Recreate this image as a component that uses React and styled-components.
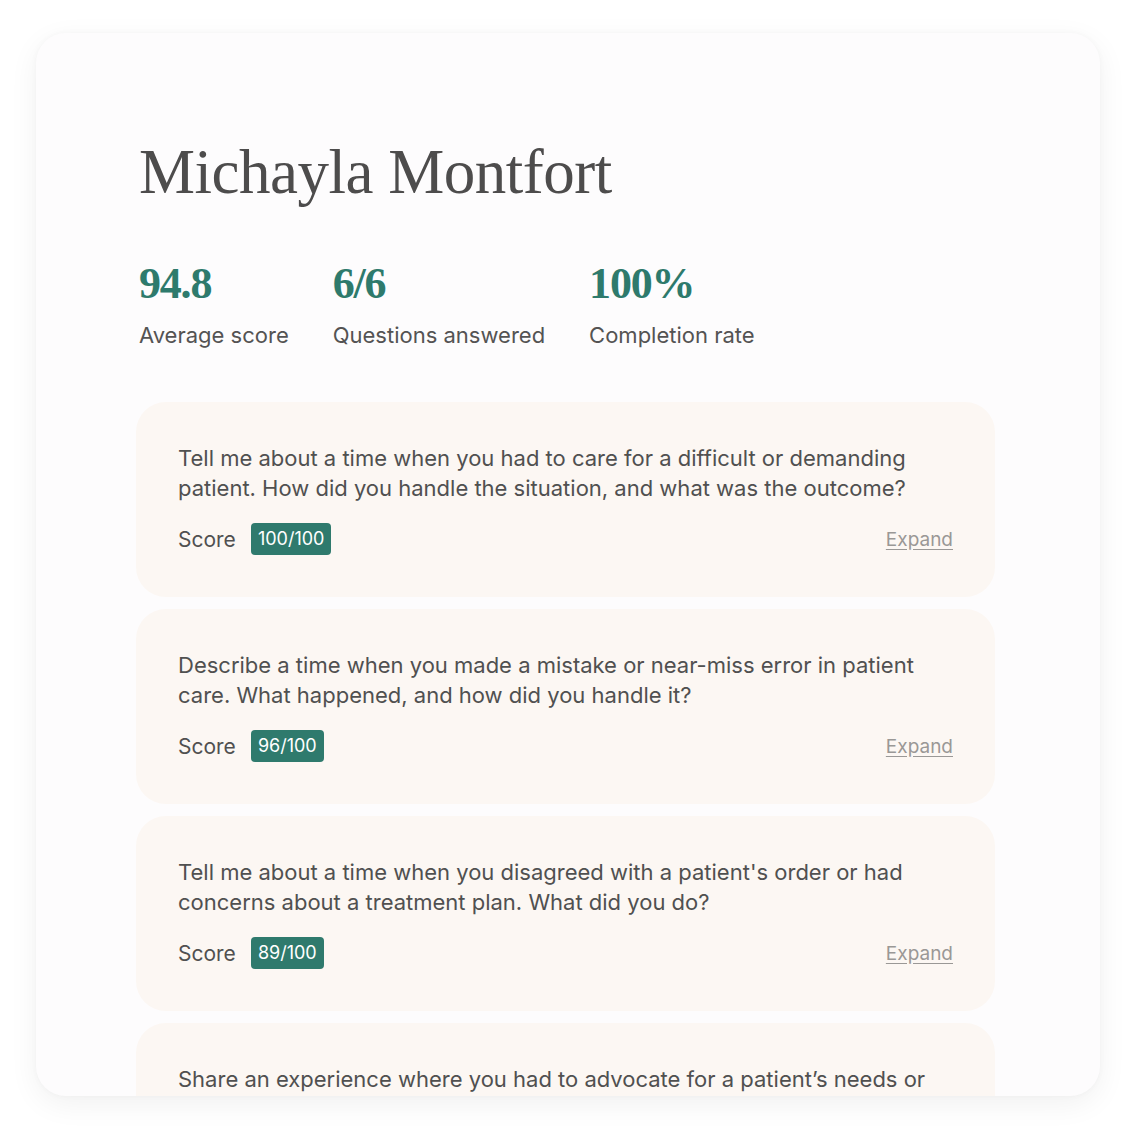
import React from "react";
import styled, { createGlobalStyle } from "styled-components";

const Global = createGlobalStyle`
  html, body { margin: 0; padding: 0; background: #ffffff; }
  body { font-family: "Inter", "Liberation Sans", sans-serif; }
`;

const Page = styled.div`
  width: 1137px;
  height: 1137px;
  padding: 33px 37px 41px 36px;
  box-sizing: border-box;
`;

const Panel = styled.div`
  height: 100%;
  background: #fdfcfd;
  border-radius: 30px;
  box-shadow: 0 8px 30px rgba(0, 0, 0, 0.06), 0 0 6px rgba(0, 0, 0, 0.03);
  overflow: hidden;
  padding: 108px 105px 0 100px;
  box-sizing: border-box;
  display: flex;
  flex-direction: column;
`;

const Name = styled.h1`
  margin: 0 0 0 3px;
  font-family: "Liberation Serif", "DejaVu Serif", serif;
  font-weight: 400;
  font-size: 63px;
  line-height: 1;
  color: #4d4c4c;
  letter-spacing: -0.5px;
`;

const Stats = styled.div`
  display: flex;
  gap: 44px;
  margin: 58px 0 0 3px;
`;

const Stat = styled.div`
  display: flex;
  flex-direction: column;
  gap: 16px;
`;

const Value = styled.div`
  font-family: "Liberation Serif", "DejaVu Serif", serif;
  font-weight: 700;
  font-size: 44px;
  line-height: 1;
  color: #2e7a6c;
  letter-spacing: -1.2px;
`;

const Label = styled.div`
  font-size: 22px;
  line-height: 1.2;
  color: #545353;
`;

const List = styled.div`
  display: flex;
  flex-direction: column;
  gap: 12px;
  margin-top: 54px;
`;

const Card = styled.div`
  background: #fcf7f3;
  border-radius: 30px;
  padding: 41px 42px 42px 42px;
  display: flex;
  flex-direction: column;
  gap: 20px;
`;

const Question = styled.p`
  margin: 0;
  font-size: 22px;
  line-height: 30px;
  color: #505050;
`;

const ScoreRow = styled.div`
  display: flex;
  align-items: center;
  gap: 15px;
  height: 32px;
`;

const ScoreLabel = styled.span`
  font-size: 21px;
  color: #505050;
`;

const Badge = styled.span`
  background: #2f7a6d;
  color: #ffffff;
  font-size: 18px;
  line-height: 32px;
  padding: 0 7px;
  border-radius: 4px;
`;

const Expand = styled.a`
  margin-left: auto;
  font-size: 19px;
  color: #9a9896;
  text-decoration: underline;
  text-underline-offset: 3px;
  cursor: pointer;
`;

const stats = [
  { value: "94.8", label: "Average score" },
  { value: "6/6", label: "Questions answered" },
  { value: "100%", label: "Completion rate" },
];

const questions = [
  {
    text: "Tell me about a time when you had to care for a difficult or demanding patient. How did you handle the situation, and what was the outcome?",
    score: "100/100",
  },
  {
    text: "Describe a time when you made a mistake or near-miss error in patient care. What happened, and how did you handle it?",
    score: "96/100",
  },
  {
    text: "Tell me about a time when you disagreed with a patient's order or had concerns about a treatment plan. What did you do?",
    score: "89/100",
  },
  {
    text: "Share an experience where you had to advocate for a patient\u2019s needs or preferences. What did you do, and what was the result?",
    score: "98/100",
  },
];

export default function App() {
  return (
    <>
      <Global />
      <Page>
        <Panel>
          <Name>Michayla Montfort</Name>
          <Stats>
            {stats.map((s) => (
              <Stat key={s.label}>
                <Value>{s.value}</Value>
                <Label>{s.label}</Label>
              </Stat>
            ))}
          </Stats>
          <List>
            {questions.map((q, i) => (
              <Card key={i}>
                <Question>{q.text}</Question>
                <ScoreRow>
                  <ScoreLabel>Score</ScoreLabel>
                  <Badge>{q.score}</Badge>
                  <Expand>Expand</Expand>
                </ScoreRow>
              </Card>
            ))}
          </List>
        </Panel>
      </Page>
    </>
  );
}
